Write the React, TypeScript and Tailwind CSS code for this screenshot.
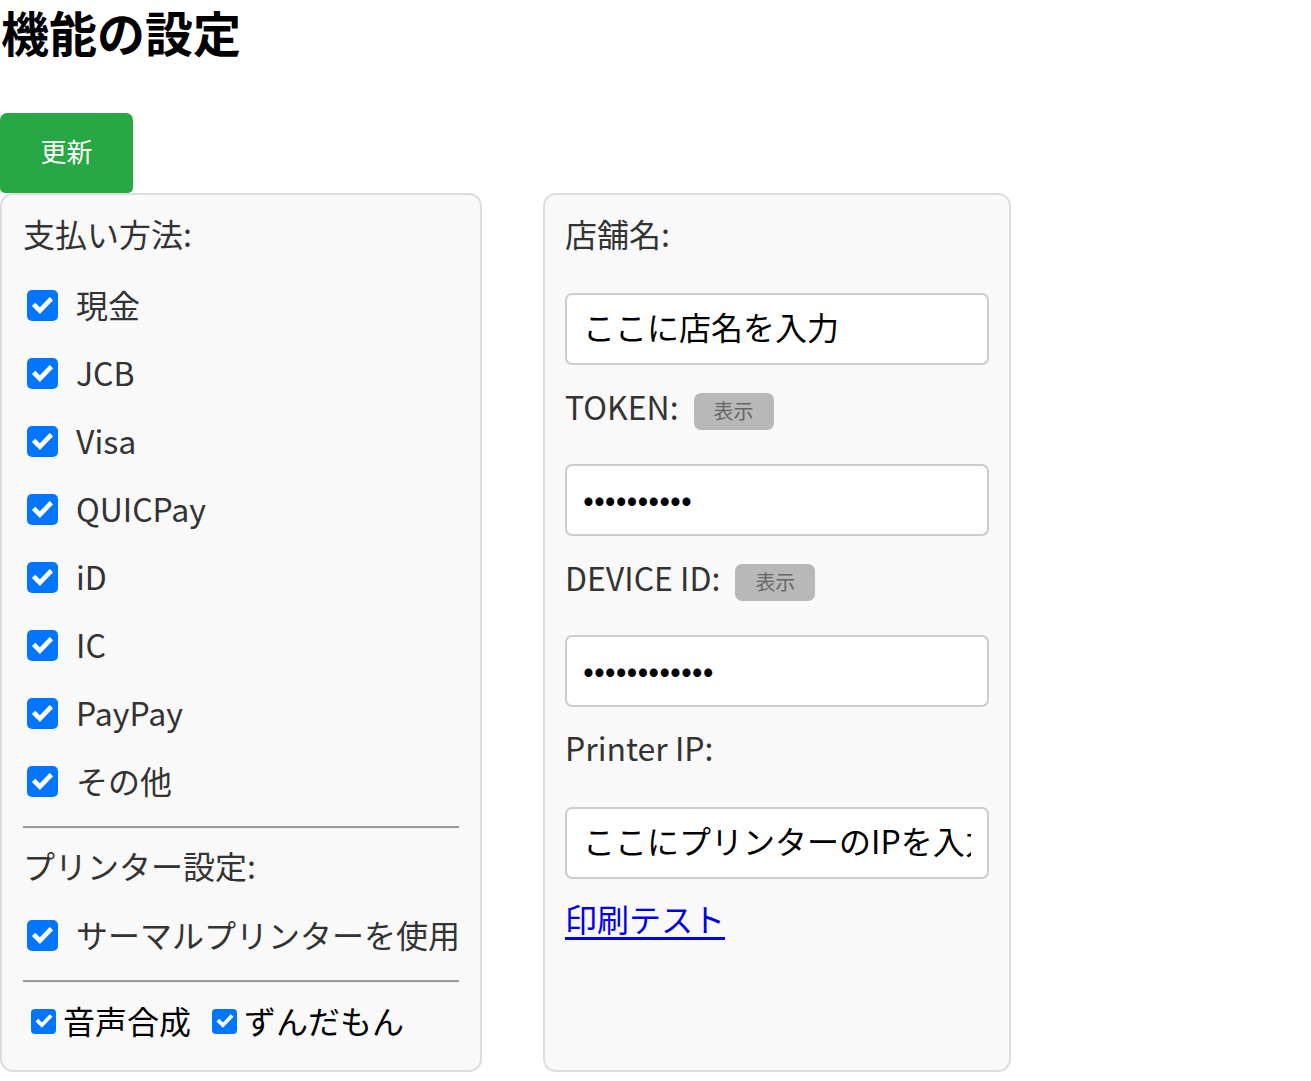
import React, { useState } from 'react';

const font = { fontFamily: '"Noto Sans CJK JP", "Noto Sans", sans-serif' };

function Check({ checked, onChange, size = 'lg' }: { checked: boolean; onChange: () => void; size?: 'lg' | 'sm' }) {
  const box = size === 'lg' ? 'w-[31px] h-[31px] rounded-[5px]' : 'w-[25px] h-[25px] rounded-[4px]';
  const icon = size === 'lg' ? 'w-[25px] h-[25px]' : 'w-[20px] h-[20px]';
  return (
    <button
      type="button"
      onClick={onChange}
      className={`${box} shrink-0 flex items-center justify-center ${checked ? 'bg-[#0075ff]' : 'bg-white border-2 border-[#767676]'}`}
    >
      {checked && (
        <svg viewBox="0 0 24 24" className={icon} fill="none" stroke="white" strokeWidth="4.5" strokeLinecap="square">
          <path d="M5 12.5l4.5 4.5L19 7" />
        </svg>
      )}
    </button>
  );
}

const inputCls =
  'w-[424px] h-[72px] pl-[16px] pr-[16px] pb-[7px] bg-white border-2 border-[#ccc] rounded-[7px] text-[32px] text-black outline-none';

function SecretField({ label, value }: { label: string; value: string }) {
  const [show, setShow] = useState(false);
  return (
    <>
      <div className="h-[46px] flex items-center gap-[15px] mb-[33px]">
        <span className="text-[32px] text-[#333] -mt-[4px]">{label}</span>
        <button
          type="button"
          onClick={() => setShow(!show)}
          className="w-[80px] h-[37px] mt-[6px] rounded-[7px] bg-[#b8b8b8] text-[#666] text-[20px] leading-none"
        >
          表示
        </button>
      </div>
      <input type={show ? 'text' : 'password'} defaultValue={value} className={`${inputCls} mb-[20px]`} style={font} />
    </>
  );
}

export default function App() {
  const [payments, setPayments] = useState<Record<string, boolean>>({
    現金: true,
    JCB: true,
    Visa: true,
    QUICPay: true,
    iD: true,
    IC: true,
    PayPay: true,
    その他: true,
  });
  const [thermal, setThermal] = useState(true);
  const [voice, setVoice] = useState(true);
  const [zunda, setZunda] = useState(true);

  return (
    <div className="min-h-screen bg-white text-black" style={font}>
      {/* Header */}
      <h1 className="text-[48px] font-bold leading-[62px] h-[113px] pl-[1px]">機能の設定</h1>

      <button
        type="button"
        className="w-[133px] h-[80px] pb-[6px] bg-[#28a745] text-white text-[26px] rounded-t-[7px] rounded-b-[5px]"
      >
        更新
      </button>

      <div className="flex gap-[61px] items-stretch">
        {/* Payment / printer panel */}
        <div className="w-[482px] h-[879px] bg-[#f9f9f9] border-2 border-[#ddd] rounded-[13px] px-[21px] pt-[18px]">
          <div className="h-[46px] -mt-[3px] mb-[15px] flex items-center text-[32px] text-[#333]">支払い方法:</div>
          {Object.keys(payments).map(name => (
            <label key={name} className="h-[68px] flex items-center gap-[18px] pl-[4px] cursor-pointer">
              <Check checked={payments[name]} onChange={() => setPayments({ ...payments, [name]: !payments[name] })} />
              <span className="text-[32px] text-[#333] -mt-[3px]">{name}</span>
            </label>
          ))}
          <div className="mt-[11px] h-[3px] border-t-2 border-[#999] border-b border-b-[#eee]" />
          <div className="h-[46px] mt-[13px] mb-[2px] flex items-center text-[32px] text-[#333]">プリンター設定:</div>
          <label className="h-[68px] mt-[13px] flex items-center gap-[18px] pl-[4px] cursor-pointer">
            <Check checked={thermal} onChange={() => setThermal(!thermal)} />
            <span className="text-[32px] text-[#333] whitespace-nowrap -mt-[3px]">サーマルプリンターを使用</span>
          </label>
          <div className="mt-[11px] h-[3px] border-t-2 border-[#999] border-b border-b-[#eee]" />
          <div className="h-[50px] mt-[13px] flex items-center pl-[8px]">
            <label className="flex items-center gap-[7px] cursor-pointer">
              <Check size="sm" checked={voice} onChange={() => setVoice(!voice)} />
              <span className="text-[32px] text-black -mt-[3px]">音声合成</span>
            </label>
            <label className="flex items-center gap-[7px] ml-[21px] cursor-pointer">
              <Check size="sm" checked={zunda} onChange={() => setZunda(!zunda)} />
              <span className="text-[32px] text-black -mt-[3px]">ずんだもん</span>
            </label>
          </div>
        </div>

        {/* Store settings panel */}
        <div className="w-[468px] bg-[#f9f9f9] border-2 border-[#ddd] rounded-[13px] px-[20px] pt-[18px] flex flex-col items-start">
          <div className="h-[46px] -mt-[3px] mb-[37px] flex items-center text-[32px] text-[#333]">店舗名:</div>
          <input type="text" defaultValue="ここに店名を入力" className={`${inputCls} mb-[20px]`} style={font} />
          <SecretField label="TOKEN:" value="abcdefghij" />
          <SecretField label="DEVICE ID:" value="abcdefghijkl" />
          <div className="h-[46px] -mt-[3px] mb-[37px] flex items-center text-[32px] text-[#333]">Printer IP:</div>
          <input type="text" defaultValue="ここにプリンターのIPを入力" className={`${inputCls} mb-[16px]`} style={font} />
          <a href="#" className="h-[46px] flex items-center text-[32px] text-[#0000ee] underline underline-offset-[5px]">
            印刷テスト
          </a>
        </div>
      </div>
    </div>
  );
}
